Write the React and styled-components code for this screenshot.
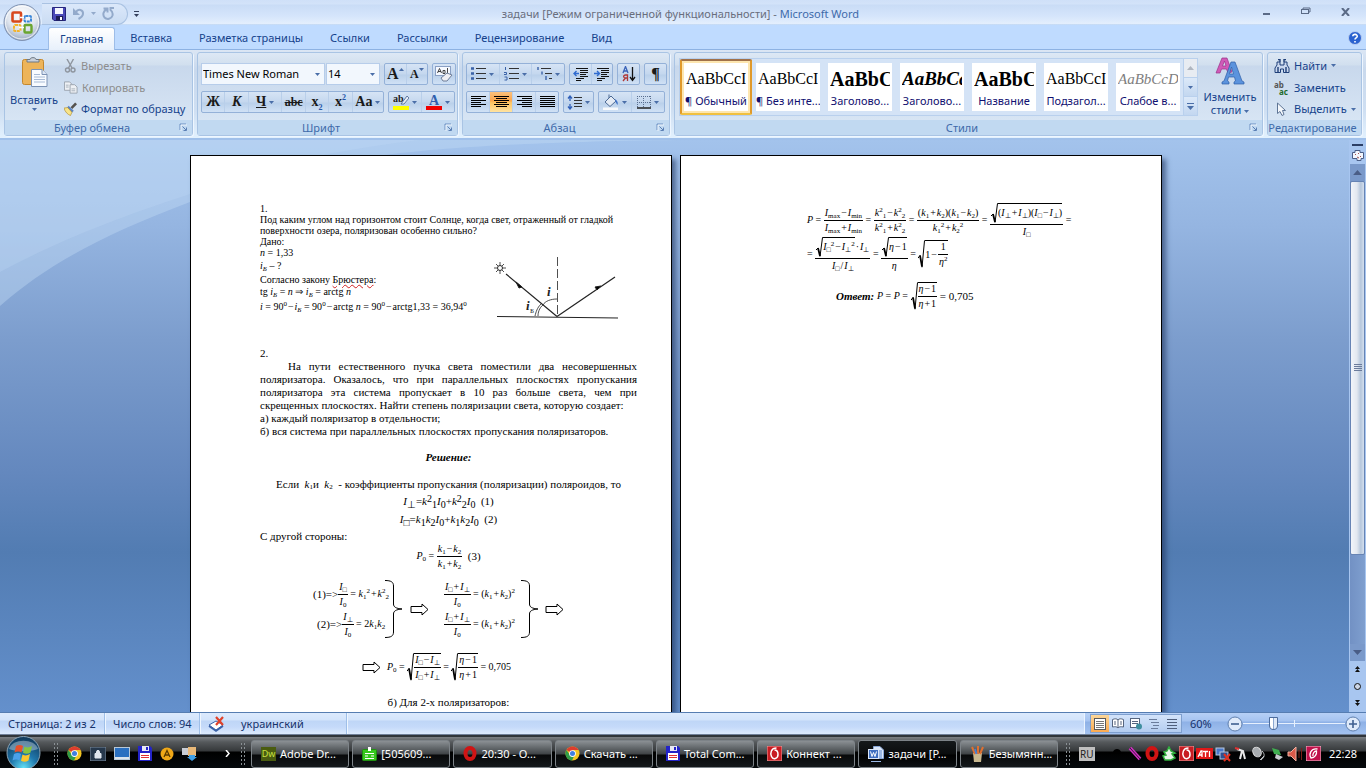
import React from "react";
import styled, { createGlobalStyle, css } from "styled-components";

const UI = '"Noto Sans", "Open Sans", sans-serif';
const SERIF = '"Liberation Serif", serif';

const GlobalStyle = createGlobalStyle`
  * { box-sizing: border-box; }
  body { margin: 0; background: #658fcb; }
  button, select, input { font: inherit; color: inherit; }
`;

/* ---------- shell ---------- */
const Window = styled.div`
  display: flex;
  flex-direction: column;
  height: 100vh;
  min-height: 600px;
  overflow: hidden;
  position: relative;
  font-family: ${UI};
  font-size: 11px;
  line-height: 14px;
  color: #15428b;
  background: #bfdbff;
`;

const PlainButton = styled.button`
  display: inline-flex;
  align-items: center;
  justify-content: center;
  border: 0;
  padding: 0;
  background: none;
  white-space: nowrap;
  cursor: default;
`;

const TitleBar = styled.header`
  flex: none;
  display: flex;
  align-items: center;
  height: 25px;
  padding-top: 2px;
  background: linear-gradient(#cfe0f8 0, #d3e3f9 4px, #c9dcf6 5px, #d5e5fb 16px, #e4effd 24px, #a9c8ee 25px);
`;
const QuickAccess = styled.div`
  display: flex;
  align-items: center;
  gap: 6px;
  height: 22px;
  margin-left: 42px;
  padding: 0 12px 0 10px;
  border: 1px solid #a9c2e2;
  border-left: 0;
  border-radius: 0 11px 11px 0;
  background: linear-gradient(#dbe8fa, #cadcf3);
`;
const Customize = styled(PlainButton)`
  margin-left: 6px;
`;
const Title = styled.h1`
  flex: 1;
  margin: 0;
  padding-right: 24px;
  font-size: 11px;
  font-weight: 400;
  line-height: 14px;
  text-align: center;
  color: #696e7d;
  white-space: nowrap;
`;
const AppName = styled.span`
  color: #3e6aaa;
`;
const WindowButtons = styled.div`
  display: flex;
  gap: 30px;
  padding: 0 16px 4px 0;
  width: 120px;
  justify-content: flex-end;
`;
const OfficeButton = styled(PlainButton)`
  position: absolute;
  left: 2px;
  top: 3px;
`;

const TabBar = styled.nav`
  flex: none;
  display: flex;
  align-items: flex-end;
  height: 25px;
  padding: 0 4px 0 48px;
  background: #bfdbff;
  border-bottom: 1px solid #8db2e3;
`;
const Tab = styled(PlainButton)`
  height: 22px;
  padding: 0 12px 0 11px;
  margin-right: 4px;
  border-radius: 3px 3px 0 0;
  ${(p) =>
    p.$active &&
    css`
      height: 23px;
      margin-bottom: -1px;
      padding: 0 11px;
      border: 1px solid #9dbde8;
      border-bottom: 0;
      background: linear-gradient(#ffffff, #e7f0fb);
    `}
`;
const HelpButton = styled(PlainButton)`
  margin: 0 0 4px auto;
`;

/* ---------- ribbon ---------- */
const Ribbon = styled.section`
  flex: none;
  display: flex;
  gap: 4px;
  height: 90px;
  padding: 2px 4px 2px 4px;
  border-bottom: 2px solid #a0c0ea;
  background: linear-gradient(#dbe6f4, #c9d9ed 20px, #cfdff2 60px, #e2f1fe);
`;
const GroupBox = styled.fieldset`
  display: flex;
  flex-direction: column;
  flex: ${(p) => (p.$grow ? "1" : "none")};
  width: ${(p) => p.$w || "auto"};
  min-width: 0;
  margin: 0;
  padding: 0;
  border: 1px solid #a9c4e4;
  border-radius: 3px;
  background: linear-gradient(#dde8f5, #d1dfee 12px, #c8d8ec 13px, #dbe8f6);
  box-shadow: 1px 1px 0 #eef6ff;
`;
const GroupBody = styled.div`
  flex: 1;
  display: flex;
  min-height: 0;
`;
const GroupFooter = styled.div`
  display: flex;
  align-items: center;
  height: 15px;
  padding-right: 4px;
  background: #c1d9f1;
  color: #3e6aaa;
`;
const GroupName = styled.span`
  flex: 1;
  text-align: center;
  white-space: nowrap;
`;
const BigButton = styled(PlainButton)`
  flex-direction: column;
  justify-content: flex-start;
  width: ${(p) => p.$w};
  padding-top: 4px;
  line-height: 13px;
`;
const BigLabel = styled.span`
  margin: 5px 0 2px;
`;
const Stack = styled.div`
  display: flex;
  flex-direction: column;
  align-items: flex-start;
  padding: 2px 0 0 ${(p) => p.$pad};
`;
const RowButton = styled(PlainButton)`
  height: 22px;
  gap: 4px;
  color: ${(p) => (p.disabled ? "#8d8d8d" : "#15428b")};
`;
const ToolRows = styled.div`
  flex: 1;
  display: flex;
  flex-direction: column;
  gap: 6px;
  padding: 10px 3px 0;
`;
const ToolRow = styled.div`
  display: flex;
  gap: 4px;
  height: 22px;
`;
const ButtonSet = styled.div`
  display: flex;
  border: 1px solid #94b1d8;
  border-radius: 2px;
  background: linear-gradient(#d6e4f5, #c4d7ee 10px, #bad0ea 11px, #d0e1f5);
  width: ${(p) => p.$w};
`;
const Tool = styled(PlainButton)`
  flex: ${(p) => p.$flex || 1};
  gap: 3px;
  border-right: 1px solid #b9cfea;
  &:last-child { border-right: 0; }
  ${(p) =>
    p.$on &&
    css`
      background: linear-gradient(#fbc17d, #fba54a 9px, #fdc25e 10px, #ffe3a0);
    `}
`;
const SizeTool = styled(Tool)`
  gap: 0;
  & svg { align-self: flex-start; margin-top: 4px; }
`;
const Combos = styled.div`
  display: flex;
  gap: 1px;
`;
const Combo = styled.span`
  display: flex;
  align-items: center;
  width: ${(p) => p.$w};
  padding-right: 4px;
  background: #f2f7fd;
  border: 1px solid #b7cdea;
`;
const ComboSelect = styled.select`
  flex: 1;
  min-width: 0;
  appearance: none;
  border: 0;
  padding: 0 1px;
  background: none;
  color: #000;
`;
const Glyph = styled.span`
  font-family: ${SERIF};
  font-size: ${(p) => p.$size || "14px"};
  font-weight: 700;
  font-style: ${(p) => (p.$italic ? "italic" : "normal")};
  text-decoration: ${(p) => p.$deco || "none"};
  color: #1a1a1a;
  line-height: 16px;
  & sub, & sup { font-size: 8px; line-height: 0; color: #2456a8; }
`;

const Gallery = styled.div`
  flex: 1;
  display: flex;
  min-width: 0;
  margin: 5px 0 4px 4px;
  border: 1px solid #b9d0ed;
  background: #d4e3f6;
`;
const GalleryItems = styled.div`
  flex: 1;
  display: flex;
  min-width: 0;
  overflow: hidden;
`;
const StyleCell = styled(PlainButton)`
  flex: none;
  flex-direction: column;
  width: 72px;
  padding: 4px;
  ${(p) =>
    p.$on &&
    css`
      padding: 2px;
      border: 2px solid #e0992b;
      border-top-color: #a0714a;
      border-bottom-color: #f0c040;
      border-radius: 2px;
      background: #fde6b0;
    `}
`;
const StyleCard = styled.span`
  display: flex;
  flex-direction: column;
  width: 64px;
  height: 48px;
  background: #fff;
  overflow: hidden;
  text-align: center;
  color: #101070;
`;
const Sample = styled.span`
  height: 31px;
  width: 60px;
  margin: 0 2px;
  overflow: hidden;
  text-align: left;
  font-family: ${SERIF};
  font-size: ${(p) => p.$size || "16px"};
  line-height: 32px;
  font-weight: ${(p) => (p.$bold ? 700 : 400)};
  font-style: ${(p) => (p.$italic ? "italic" : "normal")};
  color: ${(p) => p.$color || "#000"};
`;
const GalleryScroll = styled.div`
  display: flex;
  flex-direction: column;
  width: 14px;
  border-left: 1px solid #b9d0ed;
`;
const GalleryButton = styled(PlainButton)`
  flex: 1;
  border-bottom: 1px solid #b9d0ed;
  background: ${(p) => (p.disabled ? "#e8ecf2" : "linear-gradient(#dce9f9, #c3d7f0)")};
  &:last-child { border-bottom: 0; }
`;
const InlineArrow = styled.svg`
  vertical-align: middle;
`;

/* ---------- document area ---------- */
const Workspace = styled.main`
  flex: 1;
  display: flex;
  min-height: 0;
  position: relative;
  isolation: isolate;
  background: linear-gradient(#a3c3ec 0, #95b5e1 15%, #7c9dcd 35%, #6488be 58%, #527cb2 72%, #6490cc 100%);
`;
const Swoosh = styled.svg`
  position: absolute;
  inset: 0;
  width: 100%;
  height: 100%;
  z-index: -1;
`;
const Pages = styled.div`
  flex: 1;
  display: flex;
  justify-content: center;
  gap: 8px;
  padding: 15px 0 0 3px;
  overflow: hidden;
`;
const Page = styled.article`
  flex: none;
  width: 482px;
  height: 680px;
  padding: 47px 34px 0 69px;
  border: 1px solid #000;
  background: #fff;
  box-shadow: 4px 4px 5px rgba(30, 50, 90, 0.6);
  color: #000;
  font-family: ${SERIF};
  font-size: 11px;
  line-height: 13px;
`;
const Line = styled.div`
  display: flex;
  align-items: center;
  justify-content: ${(p) => (p.$center ? "center" : "flex-start")};
  height: ${(p) => p.$h || "13px"};
  margin-top: ${(p) => p.$gap || "0"};
  padding-left: ${(p) => p.$indent || "0"};
  white-space: pre;
`;
const Small = styled.section`
  font-size: 10px;
  line-height: 11px;
`;
const Para = styled.p`
  margin: 0;
  white-space: pre-line;
  text-align: ${(p) => (p.$justify ? "justify" : "left")};
  text-indent: ${(p) => (p.$justify ? "28px" : "0")};
`;
const Given = styled.div`
  display: flex;
  justify-content: space-between;
`;
const Figure = styled.svg`
  display: block;
  margin: 19px 16px 0 0;
`;
const Misspelt = styled.span`
  text-decoration: underline wavy #d02020 1px;
  text-underline-offset: 1px;
`;
const Heading = styled.h2`
  margin: 13px 0 12px;
  font-size: 11px;
  line-height: 13px;
  font-style: italic;
  text-align: center;
`;
const Systems = styled.div`
  display: flex;
  align-items: center;
  height: 58px;
  margin-top: 12px;
  padding-left: 53px;
  white-space: pre;
`;
const System = styled.div`
  display: flex;
  flex-direction: column;
  gap: 3px;
  width: ${(p) => p.$w};
`;
const Drawing = styled.svg`
  flex: none;
  display: block;
  margin-left: ${(p) => p.$ml || "0"};
  margin-right: ${(p) => p.$mr || "0"};
`;
const SecondPage = styled.div`
  padding-left: 57px;
`;

/* ---------- formulas ---------- */
const Eq = styled.span`
  display: inline-flex;
  align-items: center;
  white-space: pre;
  font-size: 10px;
  line-height: 12px;
`;
const FracBox = styled.span`
  display: inline-flex;
  flex-direction: column;
  align-items: center;
  line-height: 12px;
`;
const Numerator = styled.span`
  display: inline-flex;
  align-items: center;
  justify-content: center;
  align-self: stretch;
  padding: 0 1px 1px;
  border-bottom: 1px solid #000;
`;
const Denominator = styled.span`
  display: inline-flex;
  align-items: center;
  padding: 1px 1px 0;
`;
const RootBox = styled.span`
  display: inline-flex;
  align-items: stretch;
`;
const Radicand = styled.span`
  display: inline-flex;
  align-items: center;
  border-top: 1px solid #000;
`;
const RootSign = styled.svg`
  display: block;
  width: 7px;
  height: auto;
  flex: none;
`;
const Script = styled.span`
  font-size: ${(p) => p.$size || "7px"};
  font-style: normal;
  position: relative;
  top: ${(p) => (p.$up ? "-3px" : "3px")};
`;
const V = styled.i`
  font-family: ${SERIF};
`;
const Op = styled.span`
  padding: 0 1px;
`;
const Sb = ({ size, children }) => <Script $size={size}>{children}</Script>;
const Sp = ({ size, children }) => <Script $up $size={size}>{children}</Script>;
const Minus = () => <Op>−</Op>;
const Plus = () => <Op>+</Op>;
const Frac = ({ n, d }) => (
  <FracBox>
    <Numerator>{n}</Numerator>
    <Denominator>{d}</Denominator>
  </FracBox>
);
const Root = ({ children }) => (
  <RootBox>
    <RootSign viewBox="0 0 7 20" preserveAspectRatio="none" aria-hidden="true">
      <path d="M0 13L2 11" fill="none" stroke="#000" vectorEffect="non-scaling-stroke" />
      <path d="M2 11L4 19" fill="none" stroke="#000" strokeWidth="1.800" vectorEffect="non-scaling-stroke" />
      <path d="M4 19.500L6.500 0.500H7" fill="none" stroke="#000" vectorEffect="non-scaling-stroke" />
    </RootSign>
    <Radicand>{children}</Radicand>
  </RootBox>
);
const I = ({ s, size }) => (<><V>I</V><Sb size={size}>{s}</Sb></>);
const K = ({ s, p, size }) => (<><V>k</V>{p && <Sp size={size}>{p}</Sp>}<Sb size={size}>{s}</Sb></>);
const PAR = "□";

/* ---------- scrollbar ---------- */
const ScrollColumn = styled.div`
  flex: none;
  display: flex;
  flex-direction: column;
  align-items: center;
  width: 17px;
  padding-top: 4px;
  background: #a8c6f0;
`;
const ScrollTrack = styled.div`
  flex: 1;
  width: 15px;
  display: flex;
  flex-direction: column;
  background: linear-gradient(90deg, #7291c4, #7f9fcf);
`;
const ScrollThumb = styled.div`
  display: flex;
  align-items: center;
  justify-content: center;
  height: 78%;
  border: 1px solid #6784b4;
  border-radius: 2px;
  background: linear-gradient(90deg, #f2f5fa, #e3e8f0 45%, #b6c7dc 75%, #d5e0ee);
`;
const ScrollButton = styled(PlainButton)`
  width: 15px;
  height: 17px;
  flex: none;
  background: ${(p) => (p.$bare ? "none" : "#7a99ca")};
`;

/* ---------- status bar ---------- */
const StatusBar = styled.footer`
  flex: none;
  display: flex;
  align-items: stretch;
  height: 23px;
  border-top: 1px solid #567db1;
  border-bottom: 1px solid #6f7f98;
  background: linear-gradient(#dceafd 0, #d3e4fb 7px, #bfd6f7 8px, #c5dafa 14px, #dceafd);
  color: #15326b;
`;
const StatusItem = styled.span`
  display: flex;
  align-items: center;
  padding: 0 9px 0 8px;
  gap: 16px;
  width: ${(p) => p.$w || "auto"};
  border-right: 1px solid #9fbfe8;
  box-shadow: 1px 0 0 #eef6ff;
  white-space: nowrap;
`;
const StatusRight = styled.div`
  display: flex;
  align-items: center;
  gap: 8px;
  margin-left: auto;
  padding: 0 5px;
  border-left: 1px solid #eaf3ff;
  background: linear-gradient(#b6d0f6 0, #a5c3f0 8px, #8eb1e6 9px, #a3c2f0);
`;
const ViewButtons = styled.div`
  display: flex;
  height: 19px;
  border: 1px solid #7e9fce;
  background: linear-gradient(#d3e3fa, #b4cdf0);
`;
const ViewButton = styled(PlainButton)`
  width: 18px;
  background: ${(p) => (p.$on ? "linear-gradient(#fcd799, #fba94f)" : "none")};
`;
const ZoomValue = styled.span`
  width: 24px;
  margin-right: 5px;
`;
const ZoomSlider = styled.input`
  appearance: none;
  width: 102px;
  height: 15px;
  margin: 0 -8px;
  background:
    linear-gradient(#e6f0fe, #e6f0fe) center / 1px 7px no-repeat,
    linear-gradient(#e6f0fe, #e6f0fe) center / 100% 1px no-repeat;
  &::-webkit-slider-thumb {
    appearance: none;
    width: 9px;
    height: 13px;
    border: 1px solid #4d6c9c;
    border-radius: 1px 1px 5px 5px;
    background: linear-gradient(90deg, #ffffff 3px, #8ba7d0 3px, #8ba7d0 4px, #dfe9f7 4px);
  }
`;

/* ---------- task bar ---------- */
const TaskBar = styled.nav`
  flex: none;
  display: flex;
  align-items: center;
  height: 33px;
  padding: 2px 9px 0 6px;
  border-top: 2px solid #30353a;
  background: linear-gradient(#7c8084 0, #55595c 5px, #35383a 14px, #000 15px, #05090c 31px);
  color: #fff;
`;
const Launchers = styled.div`
  display: flex;
  align-items: center;
  gap: 8px;
  width: 181px;
  padding-left: 8px;
`;
const Chevron = styled(PlainButton)`
  margin: 0 10px 0 auto;
  font-weight: 700;
`;
const Grip = styled.span`
  flex: none;
  width: 6px;
  height: 24px;
  margin-left: ${(p) => p.$ml || "0"};
  background: radial-gradient(circle, #8a9094 1px, transparent 1px) 0 0 / 3px 4px;
`;
const Tasks = styled.div`
  flex: 1;
  display: flex;
  gap: 3px;
  min-width: 0;
  padding: 0 7px 0 5px;
`;
const Task = styled(PlainButton)`
  flex: 1;
  min-width: 0;
  height: 28px;
  justify-content: flex-start;
  gap: 4px;
  padding: 0 2px 0 9px;
  border: 1px solid #7d8388;
  border-radius: 3px;
  background: ${(p) =>
    p.$on
      ? "linear-gradient(#15191b, #0a0c0d 13px, #000 14px, #0c1013)"
      : "linear-gradient(#8b9094, #5c6164 8px, #3f4346 13px, #08090a 14px, #14181b)"};
`;
const Lang = styled.span`
  width: 16px;
  height: 14px;
  margin: 0 14px 0 8px;
  background: #bfbfbf;
  color: #222;
  font-size: 10px;
  text-align: center;
`;
const Tray = styled.div`
  display: flex;
  align-items: center;
  gap: 2px;
`;
const Clock = styled.time`
  margin-left: 8px;
`;
const Orb = styled(PlainButton)`
  margin-top: -2px;
`;

/* ---------- icons ---------- */
const SvgBase = styled.svg`
  flex: none;
  display: block;
`;
const Svg = ({ w = 16, h = 16, vb, children }) => (
  <SvgBase width={w} height={h} viewBox={vb || `0 0 ${w} ${h}`} fill="none" aria-hidden="true">
    {children}
  </SvgBase>
);
const Down = ({ c = "#4a6ea8" }) => (
  <Svg w={5} h={3}><path d="M0 0H5L2.500 3Z" fill={c} /></Svg>
);
const Up = ({ c = "#4a6ea8", w = 7, h = 4 }) => (
  <Svg w={w} h={h} vb="0 0 7 4"><path d="M0 4H7L3.500 0Z" fill={c} /></Svg>
);
const Launcher = () => (
  <Svg w={9} h={9}>
    <path d="M1 7V1H7" stroke="#6a8fc2" />
    <path d="M3.500 3.500L7 7M7.500 4.500V7.500H4.500" stroke="#5b7fb4" />
    <path d="M2 8V2H8" stroke="#fff" opacity=".7" />
  </Svg>
);
const OfficeLogo = () => (
  <Svg w={40} h={40}>
    <defs>
      <radialGradient id="ob" cx=".5" cy=".3" r=".75">
        <stop offset="0" stopColor="#ffffff" />
        <stop offset=".55" stopColor="#dfe5ee" />
        <stop offset="1" stopColor="#8fa0ba" />
      </radialGradient>
    </defs>
    <circle cx="20" cy="19.500" r="18" fill="url(#ob)" stroke="#7f92b2" />
    <circle cx="20" cy="19.500" r="16.500" stroke="#fff" opacity=".8" />
    <rect x="10.500" y="9.500" width="8.500" height="9" rx="1" stroke="#d8471c" strokeWidth="2.600" />
    <rect x="22.500" y="13" width="6.500" height="5.500" rx="1" stroke="#3b86d8" strokeWidth="2" strokeDasharray="3 .7" />
    <rect x="12" y="22" width="6.500" height="6" rx="1" stroke="#f3b32c" strokeWidth="2" strokeDasharray="3 .7" />
    <rect x="22.500" y="22" width="7" height="7.500" rx="1" stroke="#6aa52f" strokeWidth="2.400" />
    <path d="M18 14.500h4M20.500 18v4M17 24.500h5" stroke="#fff" strokeWidth="1.500" />
  </Svg>
);
const Floppy = () => (
  <Svg w={14} h={14}>
    <path d="M0.500 0.500H13.500V13.500H2L.5 12Z" fill="#4a49b8" stroke="#26267e" />
    <rect x="3" y="1" width="8" height="6" fill="#f4f6ff" />
    <rect x="4" y="9" width="7" height="4.500" fill="#1d1d55" />
    <rect x="8" y="10" width="2" height="3" fill="#fff" />
  </Svg>
);
const TotalCmd = () => (
  <Svg w={14} h={15}>
    <path d="M0 0H12L14 2V15H0Z" fill="#2323c8" />
    <rect x="4" y="0" width="7" height="5" fill="#e8e8f4" />
    <rect x="8" y="1" width="2" height="3" fill="#2323c8" />
    <rect x="2" y="7" width="10" height="7" fill="#fff" />
    <path d="M3 9.500H11M3 11.500H11" stroke="#e03030" />
  </Svg>
);
const Undo = () => (
  <Svg w={13} h={13}>
    <path d="M1 1V8H8Z" fill="#93aacb" />
    <path d="M4 5C6 1.500 11.500 2.500 11 7C10.700 9.500 8.500 11 6.500 12" stroke="#93aacb" strokeWidth="2" />
  </Svg>
);
const Redo = () => (
  <Svg w={13} h={13}>
    <path d="M1.500 1.500H5.500V5.500M5 2C1 4 .5 8 2.500 10.500C5 13 9.500 12 10.500 8.500C11 6 10 4 8.500 3V1H12" stroke="#93aacb" strokeWidth="2" />
  </Svg>
);
const Paste = () => (
  <Svg w={27} h={31}>
    <rect x="1.500" y="2.500" width="21" height="25" rx="2" fill="#edb45a" stroke="#c4872c" />
    <path d="M6 5V2.500H9C9 0 15 0 15 2.500H18V5Z" fill="#c9d0da" stroke="#6f7884" />
    <path d="M10.500 12.500H21L26 17.500V29.500H10.500Z" fill="#f8fbff" stroke="#7c92b4" />
    <path d="M21 12.500V17.500H26" fill="#dce6f4" stroke="#7c92b4" />
    <path d="M13 17.500H19M13 20H24M13 22.500H24M13 25H24" stroke="#a8bbd6" />
  </Svg>
);
const Scissors = () => (
  <Svg w={13} h={14}>
    <path d="M3 0L8 9M9.500 0L4.500 9" stroke="#8e959e" strokeWidth="1.400" />
    <circle cx="3.500" cy="11" r="2" stroke="#8e959e" strokeWidth="1.400" />
    <circle cx="9" cy="11" r="2" stroke="#8e959e" strokeWidth="1.400" />
  </Svg>
);
const Copy = () => (
  <Svg w={14} h={13} vb="0 0 15 13">
    <path d="M.5.5H6L8.500 3V9.500H.5Z" fill="#eef1f5" stroke="#9aa2ad" />
    <path d="M6.500 3.500H11.500L14 6V12.500H6.500Z" fill="#eef1f5" stroke="#9aa2ad" />
    <path d="M2 4H5M2 6H5M8 8H12M8 10H12" stroke="#a7afb9" />
  </Svg>
);
const Brush = () => (
  <Svg w={13} h={14} vb="0 0 14 14">
    <path d="M7 5L12 0L14 2L9 7Z" fill="#55524e" />
    <path d="M5 3.500L10.500 9L8.500 11L3 6Z" fill="#5b84c4" />
    <path d="M0 6L4 5.500L8.500 10.500L7 14C4 13 1 10 0 6Z" fill="#f8e488" stroke="#b08a2a" strokeWidth=".7" />
  </Svg>
);
const ClearFmt = () => (
  <Svg w={18} h={16}>
    <rect x=".5" y=".5" width="15" height="9" fill="#f6f9ff" stroke="#8aa0c4" />
    <path d="M2.500 7L4.500 2.500L6.500 7M3 5.500H6M8 7.500V4.500H10V7.500H8M12.500 2V7.500" stroke="#333" strokeWidth=".9" />
    <path d="M6 12L12 7L17 9L12 15L8 15Z" fill="#f0f0f4" stroke="#6f7f9a" />
  </Svg>
);
const Bullets = ({ kind }) => (
  <Svg w={15} h={14}>
    {kind === "n" && <path d="M1.500 0V3M0 5.500H2.500V7.500H0M.5 10H3V13H.5" stroke="#3a62a8" />}
    {kind === "b" && <path d="M0 1.500H3M0 6.500H3M0 11.500H3" stroke="#3a62a8" strokeWidth="2.500" />}
    {kind === "m" && <path d="M1 0V3M5 4.500V7.500M9 9V13" stroke="#3a62a8" strokeWidth="1.400" />}
    {kind === "m" ? <path d="M4 1.500H14M8 6.500H15M12 11.500H15" stroke="#333" /> : <path d="M5 1.500H15M5 6.500H15M5 11.500H15" stroke="#333" />}
  </Svg>
);
const Indent = ({ out }) => (
  <Svg w={15} h={13}>
    <path d="M3 .5H15M7 2.500H15M7 4.500H15M7 6.500H13M7 8.500H15M3 10.500H11M3 12.500H8" stroke="#111" />
    <path d={out ? "M6 5.500H1M3.500 3L1 5.500L3.500 8" : "M0 5.500H5M3 3L5.500 5.500L3 8"} stroke="#2f6bd0" strokeWidth="1.400" />
  </Svg>
);
const SortIcon = () => (
  <Svg w={14} h={16}>
    <path d="M1 7L3.500 0.500L6 7M2 5H5" stroke="#3a62b8" strokeWidth="1.300" />
    <path d="M5.500 15V9H3.500C1 9 1 12 3.500 12H5.500M3.500 12L1 15" stroke="#b03838" strokeWidth="1.300" />
    <path d="M10.500 1V13M8 11L10.500 14.500L13 11" stroke="#111" strokeWidth="1.300" />
  </Svg>
);
const Align = ({ rows }) => (
  <Svg w={15} h={12}>
    {rows.map(([x, w], i) => <rect key={i} x={x} y={i * 2} width={w} height="1" fill="#000" />)}
  </Svg>
);
const Spacing = () => (
  <Svg w={15} h={15}>
    <path d="M3 1V6M1 3.500L3 1L5 3.500M3 9V14M1 11.500L3 14L5 11.500" stroke="#2f5fb8" strokeWidth="1.300" />
    <path d="M7 2.500H15M7 5.500H15M7 8.500H15M7 11.500H15" stroke="#333" />
  </Svg>
);
const Bucket = () => (
  <Svg w={16} h={16}>
    <path d="M2 8L8 2L13 7L7 12.500Z" fill="#e4ebf5" stroke="#4d6a94" />
    <path d="M6 4V0.500" stroke="#4d6a94" />
    <path d="M12 5C15 7 15 9 14.500 11L12.500 8Z" fill="#3f72c8" />
    <rect x="0" y="13.500" width="15" height="2.500" fill="#f7f9fc" />
  </Svg>
);
const Borders = () => (
  <Svg w={14} h={13}>
    <path d="M.5 0V12M6.500 0V12M13.500 0V12M0 .5H14M0 6.500H14" stroke="#5a6f90" strokeDasharray="1 1" />
    <path d="M0 12H14" stroke="#222" strokeWidth="1.500" />
  </Svg>
);
const Marker = () => (
  <Svg w={16} h={16}>
    <text x="0" y="8" fontFamily="Liberation Serif, serif" fontWeight="700" fontSize="10" fill="#222">ab</text>
    <path d="M8 10L14 2L16 4L11 10Z" fill="#e8eef8" stroke="#44618f" strokeWidth=".8" />
    <rect y="12" width="16" height="4" fill="#ffff00" />
  </Svg>
);
const FontColor = () => (
  <Svg w={16} h={16}>
    <text x="3" y="11" fontFamily="Liberation Serif, serif" fontWeight="700" fontSize="14" fill="#2f5fae">А</text>
    <rect y="12" width="16" height="4" fill="#f00000" />
  </Svg>
);
const ChangeStyles = () => (
  <Svg w={30} h={28}>
    <path d="M1 16L7 1H12L17 15L13 16L11.500 12H6.500L5 16ZM7.500 9H11L9.500 4Z" fill="#d05ab8" stroke="#9a3088" strokeWidth=".7" />
    <path d="M7 27V25L9 24L16 5H20L27 24L29 25V27H19V25L20.500 24L19.500 20H13.500L12.500 24L14 25V27ZM14.500 17H18.500L16.500 10Z" fill="#5b93dd" stroke="#2f5fa8" strokeWidth=".7" />
  </Svg>
);
const Binoculars = () => (
  <Svg w={16} h={14}>
    <path d="M3 3H6V6H10V3H13V6L15 9V13.500H9.500V10H6.500V13.500H1V9L3 6Z" fill="#c9d7ee" stroke="#1f3f78" />
    <path d="M4 0.500H6V3M10 3V.5H12M4 8V13M12 8V13" stroke="#1f3f78" strokeWidth="1.400" />
  </Svg>
);
const ReplaceMark = styled.span`
  display: grid;
  grid-template-rows: 7px 7px;
  width: 16px;
  font-size: 8px;
  font-weight: 700;
  line-height: 7px;
  text-align: left;
  color: #555;
`;
const ReplaceTo = styled.span`
  padding-left: 5px;
  color: #1d6b2c;
`;
const Replace = () => (
  <ReplaceMark aria-hidden="true"><span>ab</span><ReplaceTo>ac</ReplaceTo></ReplaceMark>
);
const Cursor = () => (
  <Svg w={16} h={14} vb="-2 0 16 14">
    <path d="M1.500 1V11.500L4 9.500L6 13.500L8 12.500L6.500 8.500H9.500Z" fill="#f4f7fb" stroke="#5f7596" />
  </Svg>
);
const Help = () => (
  <Svg w={14} h={14}>
    <circle cx="7" cy="7" r="6.500" fill="#2a62d0" stroke="#b9cdf0" />
    <path d="M4.800 5.200C5 2.500 9.500 3 9.200 5.500C9 7 7 7 7 8.600M7 10V11.500" stroke="#fff" strokeWidth="1.600" />
  </Svg>
);
const Chrome = () => (
  <Svg w={15} h={15} vb="0 0 16 16">
    <circle cx="8" cy="8" r="7.500" fill="#f3c522" />
    <path d="M8 8L1.500 4.200A7.500 7.500 0 0 1 14.500 4.200H8Z" fill="#dd3d2e" />
    <path d="M1.500 4.200A7.500 7.500 0 0 0 7.500 15.500L10 10L5 9Z" fill="#2f9c48" />
    <circle cx="8" cy="8" r="3.600" fill="#fff" />
    <circle cx="8" cy="8" r="2.700" fill="#3f7fe0" />
  </Svg>
);
const Opera = () => (
  <Svg w={14} h={15}>
    <ellipse cx="7" cy="7.500" rx="4.500" ry="5.500" stroke="#d01414" strokeWidth="4" />
  </Svg>
);
const Connect = () => (
  <Svg w={15} h={15}>
    <rect width="15" height="15" rx="1" fill="#c81c22" stroke="#e8a0a0" />
    <path d="M9.500 2C4 2 3 7 4.500 10.500C6 14 11 13 11 8.500C11 6 10 4 7.500 4" stroke="#fff" strokeWidth="1.500" />
  </Svg>
);
const TrayConnect = () => (
  <Svg w={15} h={15}>
    <rect width="15" height="15" fill="#c0104a" stroke="#f0c0d0" />
    <path d="M11.500 3C5 2 2.500 8 5 12C9 12 11 8 10.500 5C8 5 6.500 8 7 10" stroke="#fff" strokeWidth="1.300" />
  </Svg>
);
const Dreamweaver = () => (
  <Svg w={15} h={14}>
    <rect width="15" height="14" fill="#4a5c10" />
    <text x="7.500" y="10" textAnchor="middle" fontFamily="Noto Sans, sans-serif" fontSize="9" fill="#c8e040">Dw</text>
  </Svg>
);
const GreenId = () => (
  <Svg w={15} h={14}>
    <rect x=".5" y="2.500" width="14" height="11" rx="1" fill="#35c81c" stroke="#1f8f10" />
    <path d="M6 0H9V4H6Z" fill="#fff" />
    <path d="M3 6.500H12M3 9H6M9 9H12M3 11.500H12" stroke="#fff" />
  </Svg>
);
const WordDoc = () => (
  <Svg w={16} h={16}>
    <path d="M5.500 .5H12L15.500 4V12.500H5.500Z" fill="#dce8fa" stroke="#8aa8d8" />
    <path d="M8 5H14M8 7H14M11 9H14M11 11H14" stroke="#5a86cc" />
    <rect x=".5" y="3.500" width="10" height="9" fill="#3f6fc0" stroke="#dce8fa" />
    <path d="M2.500 5.500L4 10.500L5.500 6.500L7 10.500L8.500 5.500" stroke="#fff" />
    <path d="M3 15.500H13" stroke="#9ab8e4" />
  </Svg>
);
const Brushes = () => (
  <Svg w={15} h={16}>
    <path d="M3 7H12L11 16H4Z" fill="#c8b890" />
    <path d="M5 8L2 1M8 8V0M10 8L13 1" stroke="#e07030" strokeWidth="2" />
    <path d="M6.500 8L5 3" stroke="#4a80d0" strokeWidth="2" />
  </Svg>
);
const Wins = () => (
  <Svg w={35} h={34}>
    <defs>
      <radialGradient id="orb" cx=".5" cy=".95" r=".9">
        <stop offset="0" stopColor="#63e0f5" />
        <stop offset=".45" stopColor="#1f77ac" />
        <stop offset="1" stopColor="#123c5e" />
      </radialGradient>
    </defs>
    <circle cx="17.500" cy="17" r="16.500" fill="url(#orb)" stroke="#8aa3b5" />
    <path d="M3 13C6 2 29 2 32 13C24 16 11 16 3 13Z" fill="#fff" opacity=".35" />
    <path d="M10 10C12 8.500 15 8.500 17 10L15.500 16.500C13.500 15 11 15 8.500 16.500Z" fill="#e8502a" />
    <path d="M18.500 10.500C21 12 23.500 11.500 26 10L24.500 16.500C22 18 19.500 18 17 16.800Z" fill="#86c440" />
    <path d="M8 18C10.500 16.500 13 16.500 15 18L13.500 24.500C11.500 23 9 23 6.500 24.500Z" fill="#4aa0ea" />
    <path d="M16.500 18.500C19 20 21.500 19.500 24 18L22.500 24.500C20 26 17.500 26 15 24.800Z" fill="#fbc62c" />
  </Svg>
);
const Arrow = (p) => (
  <Drawing {...p} width="19" height="13" viewBox="0 0 19 13">
    <path d="M1 3.500H12V1L18 6.500L12 12V9.500H1Z" fill="#fff" stroke="#000" />
  </Drawing>
);
const Brace = (p) => (
  <Drawing {...p} width="19" height="58" viewBox="0 0 19 58">
    <path d="M1 .5C7 .5 9.500 2 9.500 6V24C9.500 27 12 28.500 18 29C12 29.500 9.500 31 9.500 34V52C9.500 56 7 57.500 1 57.500" fill="none" stroke="#000" />
  </Drawing>
);

/* ---------- parts ---------- */
const Group = ({ name, w, grow, plain, children }) => (
  <GroupBox $w={w} $grow={grow} aria-label={name}>
    <GroupBody>{children}</GroupBody>
    <GroupFooter>
      <GroupName>{name}</GroupName>
      {!plain && <PlainButton aria-label={`${name}: параметры`}><Launcher /></PlainButton>}
    </GroupFooter>
  </GroupBox>
);

const STYLES = [
  { name: "¶ Обычный", text: "AaBbCcI", on: true },
  { name: "¶ Без инте...", text: "AaBbCcI" },
  { name: "Заголово...", text: "AaBbCc", size: "20px", bold: true },
  { name: "Заголово...", text: "AaBbCc", size: "19px", bold: true, italic: true },
  { name: "Название", text: "AaBbCc", size: "20px", bold: true },
  { name: "Подзагол...", text: "AaBbCcI" },
  { name: "Слабое в...", text: "AaBbCcD", size: "15px", italic: true, color: "#808080" },
];

const TABS = ["Главная", "Вставка", "Разметка страницы", "Ссылки", "Рассылки", "Рецензирование", "Вид"];

const TASKS = [
  ["Adobe Dr...", <Dreamweaver />],
  ["[505609...", <GreenId />],
  ["20:30 - O...", <Opera />],
  ["Скачать ...", <Chrome />],
  ["Total Com...", <TotalCmd />],
  ["Коннект ...", <Connect />],
  ["задачи [Р...", <WordDoc />],
  ["Безымянн...", <Brushes />],
];

const CENTER = [[0, 15], [2, 11], [0, 15], [2, 11], [0, 15], [2, 11]];
const LEFT = [[0, 15], [0, 10], [0, 15], [0, 10], [0, 15], [0, 10]];
const RIGHT = [[0, 15], [5, 10], [0, 15], [5, 10], [0, 15], [5, 10]];
const FULL = [[0, 15], [0, 15], [0, 15], [0, 15], [0, 15], [0, 15]];

const RibbonBar = () => (
  <Ribbon>
    <Group name="Буфер обмена" w="189px">
      <BigButton $w="58px"><Paste /><BigLabel>Вставить</BigLabel><Down /></BigButton>
      <Stack $pad="1px">
        <RowButton disabled><Scissors />Вырезать</RowButton>
        <RowButton disabled><Copy />Копировать</RowButton>
        <RowButton><Brush />Формат по образцу</RowButton>
      </Stack>
    </Group>

    <Group name="Шрифт" w="261px">
      <ToolRows>
        <ToolRow>
          <Combos>
            <Combo $w="124px"><ComboSelect aria-label="Шрифт"><option>Times New Roman</option></ComboSelect><Down /></Combo>
            <Combo $w="54px"><ComboSelect aria-label="Размер"><option>14</option></ComboSelect><Down /></Combo>
          </Combos>
          <ButtonSet $w="44px">
            <SizeTool aria-label="Увеличить размер"><Glyph $size="16px">A</Glyph><Up w={5} h={3} /></SizeTool>
            <SizeTool aria-label="Уменьшить размер"><Glyph $size="12px">A</Glyph><Down /></SizeTool>
          </ButtonSet>
          <ButtonSet $w="24px"><Tool aria-label="Очистить формат"><ClearFmt /></Tool></ButtonSet>
        </ToolRow>
        <ToolRow>
          <ButtonSet $w="183px">
            <Tool><Glyph>Ж</Glyph></Tool>
            <Tool><Glyph $italic>К</Glyph></Tool>
            <Tool $flex="1.450"><Glyph $deco="underline">Ч</Glyph><Down /></Tool>
            <Tool><Glyph $deco="line-through" $size="12px">abc</Glyph></Tool>
            <Tool><Glyph>x<sub>2</sub></Glyph></Tool>
            <Tool><Glyph>x<sup>2</sup></Glyph></Tool>
            <Tool $flex="1.350"><Glyph>Aa</Glyph><Down /></Tool>
          </ButtonSet>
          <ButtonSet $w="67px">
            <Tool aria-label="Выделение цветом"><Marker /><Down /></Tool>
            <Tool aria-label="Цвет текста"><FontColor /><Down /></Tool>
          </ButtonSet>
        </ToolRow>
      </ToolRows>
    </Group>

    <Group name="Абзац" w="208px">
      <ToolRows>
        <ToolRow>
          <ButtonSet $w="99px">
            <Tool aria-label="Маркеры"><Bullets kind="b" /><Down /></Tool>
            <Tool aria-label="Нумерация"><Bullets kind="n" /><Down /></Tool>
            <Tool aria-label="Многоуровневый список"><Bullets kind="m" /><Down /></Tool>
          </ButtonSet>
          <ButtonSet $w="44px">
            <Tool aria-label="Уменьшить отступ"><Indent out /></Tool>
            <Tool aria-label="Увеличить отступ"><Indent /></Tool>
          </ButtonSet>
          <ButtonSet $w="23px"><Tool aria-label="Сортировка"><SortIcon /></Tool></ButtonSet>
          <ButtonSet $w="23px"><Tool><Glyph $size="16px">¶</Glyph></Tool></ButtonSet>
        </ToolRow>
        <ToolRow>
          <ButtonSet $w="93px">
            <Tool aria-label="По левому краю"><Align rows={LEFT} /></Tool>
            <Tool aria-label="По центру" $on><Align rows={CENTER} /></Tool>
            <Tool aria-label="По правому краю"><Align rows={RIGHT} /></Tool>
            <Tool aria-label="По ширине"><Align rows={FULL} /></Tool>
          </ButtonSet>
          <ButtonSet $w="31px"><Tool aria-label="Интервал"><Spacing /><Down /></Tool></ButtonSet>
          <ButtonSet $w="67px">
            <Tool aria-label="Заливка"><Bucket /><Down /></Tool>
            <Tool aria-label="Границы"><Borders /><Down /></Tool>
          </ButtonSet>
        </ToolRow>
      </ToolRows>
    </Group>

    <Group name="Стили" grow>
      <Gallery>
        <GalleryItems>
          {STYLES.map((s, i) => (
            <StyleCell key={i} $on={s.on}>
              <StyleCard>
                <Sample $size={s.size} $bold={s.bold} $italic={s.italic} $color={s.color}>{s.text}</Sample>
                {s.name}
              </StyleCard>
            </StyleCell>
          ))}
        </GalleryItems>
        <GalleryScroll>
          <GalleryButton disabled aria-label="Вверх"><Up c="#b0b6c0" /></GalleryButton>
          <GalleryButton aria-label="Вниз"><Down /></GalleryButton>
          <GalleryButton aria-label="Дополнительно"><Svg w={7} h={7}><path d="M0 .5H7" stroke="#4a6ea8" /><path d="M0 3H7L3.500 7Z" fill="#4a6ea8" /></Svg></GalleryButton>
        </GalleryScroll>
      </Gallery>
      <BigButton $w="64px">
        <ChangeStyles />
        <BigLabel>Изменить<br />стили <InlineArrow width="5" height="3" aria-hidden="true"><path d="M0 0H5L2.500 3Z" fill="#4a6ea8" /></InlineArrow></BigLabel>
      </BigButton>
    </Group>

    <Group name="Редактирование" w="95px" plain>
      <Stack $pad="6px">
        <RowButton><Binoculars />Найти <Down /></RowButton>
        <RowButton><Replace />Заменить</RowButton>
        <RowButton><Cursor />Выделить <Down /></RowButton>
      </Stack>
    </Group>
  </Ribbon>
);

const BrewsterFigure = () => (
  <Figure width="129" height="70" viewBox="0 0 129 70" fill="none" stroke="#222" aria-label="Отражение луча под углом Брюстера">
    <circle cx="8" cy="13" r="2.500" />
    <path d="M8 7V10M8 16V19M2 13H5M11 13H14M4 9L6 11M10 15L12 17M12 9L10 11M4 17L6 15" strokeWidth=".8" />
    <path d="M14 19L65 61.500" strokeWidth="1.200" />
    <path d="M65 61.500L123 22" strokeWidth="1.200" />
    <path d="M5 61.500L126 63" />
    <path d="M65.500 2V61" strokeDasharray="9 3" strokeWidth=".8" />
    <path d="M65 44C59 44 53 46 51 50M51 50C47 53 46 58 46 61M49 49C45 53 44 57 43 61" strokeWidth=".8" />
    <path d="M24 27L30 32L27 33ZM105 35L109 31L103 32Z" fill="#000" />
    <text x="55" y="41" fontFamily="Liberation Serif, serif" fontStyle="italic" fontWeight="700" fontSize="13" fill="#222" stroke="none">i</text>
    <text x="34" y="55" fontFamily="Liberation Serif, serif" fontStyle="italic" fontWeight="700" fontSize="13" fill="#222" stroke="none">i</text>
    <text x="38" y="58" fontFamily="Liberation Serif, serif" fontSize="7" fill="#222" stroke="none">Б</text>
  </Figure>
);

const iB = <><V>i</V><Sb><V>Б</V></Sb></>;

const FirstPage = () => (
  <Page>
    <Small>
      <Para>1.</Para>
      <Para>{"Под каким углом над горизонтом стоит Солнце,   когда свет, отраженный от гладкой\nповерхности озера, поляризован особенно сильно?"}</Para>
      <Given>
        <div>
          <Line $h="11px">Дано:</Line>
          <Line $h="11px"><Eq><V>n</V> = 1,33</Eq></Line>
          <Line $h="16px"><Eq>{iB} – ?</Eq></Line>
          <Line $h="11px">Согласно закону <Misspelt>Брюстера</Misspelt>:</Line>
          <Line $h="13px"><Eq>tg {iB} = <V>n</V> ⇒ {iB} = arctg <V>n</V></Eq></Line>
          <Line $h="18px"><Eq><V>i</V> = 90<Sp>0</Sp><Minus />{iB} = 90<Sp>0</Sp><Minus />arctg <V>n</V> = 90<Sp>0</Sp><Minus />arctg1,33 = 36,94<Sp>0</Sp></Eq></Line>
        </div>
        <BrewsterFigure />
      </Given>
    </Small>

    <Line $gap="22px">2.</Line>
    <Para $justify>
      На пути естественного пучка света поместили два несовершенных поляризатора. Оказалось, что при параллельных плоскостях пропускания поляризатора эта система пропускает в 10 раз больше света, чем при скрещенных плоскостях. Найти степень поляризации света, которую создает:
    </Para>
    <Line>а) каждый поляризатор в отдельности;</Line>
    <Line>б) вся система при параллельных плоскостях пропускания поляризаторов.</Line>

    <Heading>Решение:</Heading>
    <Line $h="16px" $center>Если  <V>k</V><Sb>1</Sb>и  <V>k</V><Sb>2</Sb>  - коэффициенты пропускания (поляризации) поляроидов, то</Line>
    <Line $h="18px" $center><I s="⊥" size="10px" />=<K p="2" s="1" size="10px" /><I s="0" size="10px" />+<K p="2" s="2" size="10px" /><I s="0" size="10px" />  (1)</Line>
    <Line $h="18px" $center><I s={PAR} size="10px" />=<K s="1" size="10px" /><K s="2" size="10px" /><I s="0" size="10px" />+<K s="1" size="10px" /><K s="2" size="10px" /><I s="0" size="10px" />  (2)</Line>
    <Line $h="16px">С другой стороны:</Line>
    <Line $h="24px" $center><Eq><V>P</V><Sb>0</Sb> = <Frac n={<><K s="1" /><Minus /><K s="2" /></>} d={<><K s="1" /><Plus /><K s="2" /></>} /></Eq>  (3)</Line>

    <Systems>
      <System $w="71px">
        <Line $h="27px">(1)=&gt;<Eq><Frac n={<I s={PAR} />} d={<I s="0" />} /> = <K s="1" /><Sp>2</Sp><Plus /><K p="2" s="2" /></Eq></Line>
        <Line $h="27px" $indent="4px">(2)=&gt;<Eq><Frac n={<I s="⊥" />} d={<I s="0" />} /> = 2<K s="1" /><K s="2" /></Eq></Line>
      </System>
      <Brace $mr="7px" />
      <Arrow $mr="15px" />
      <System $w="76px">
        <Line $h="27px"><Eq><Frac n={<><I s={PAR} /><Plus /><I s="⊥" /></>} d={<I s="0" />} /> = (<K s="1" /><Plus /><K s="2" />)<Sp>2</Sp></Eq></Line>
        <Line $h="27px"><Eq><Frac n={<><I s={PAR} /><Plus /><I s="⊥" /></>} d={<I s="0" />} /> = (<K s="1" /><Plus /><K s="2" />)<Sp>2</Sp></Eq></Line>
      </System>
      <Brace $mr="6px" />
      <Arrow />
    </Systems>

    <Line $h="34px" $gap="12px" $center>
      <Arrow $mr="6px" $ml="-24px" />
      <Eq><V>P</V><Sb>0</Sb> = <Root><Frac n={<><I s={PAR} /><Minus /><I s="⊥" /></>} d={<><I s={PAR} /><Plus /><I s="⊥" /></>} /></Root> = <Root><Frac n={<><V>η</V><Minus />1</>} d={<><V>η</V><Plus />1</>} /></Root> = 0,705</Eq>
    </Line>
    <Line $gap="12px" $center>б) Для 2-х поляризаторов:</Line>
  </Page>
);

const NextPage = () => (
  <Page>
    <SecondPage>
      <Line $h="34px">
        <Eq><V>P</V> = <Frac n={<><I s="max" /><Minus /><I s="min" /></>} d={<><I s="max" /><Plus /><I s="min" /></>} /> = <Frac n={<><K p="2" s="1" /><Minus /><K p="2" s="2" /></>} d={<><K p="2" s="1" /><Plus /><K p="2" s="2" /></>} /> = <Frac n={<>(<K s="1" /><Plus /><K s="2" />)(<K s="1" /><Minus /><K s="2" />)</>} d={<><K s="1" /><Sp>2</Sp><Plus /><K s="2" /><Sp>2</Sp></>} /> = <Frac n={<Root>(<I s="⊥" /><Plus /><I s="⊥" />)(<I s={PAR} /><Minus /><I s="⊥" />)</Root>} d={<I s={PAR} />} /> =</Eq>
      </Line>
      <Line $h="34px">
        <Eq>= <Frac n={<><Root><I s={PAR} /><Sp>2</Sp><Minus /><I s="⊥" /><Sp>2</Sp></Root><Op>·</Op><I s="⊥" /></>} d={<><I s={PAR} /><Op>/</Op><I s="⊥" /></>} /> = <Frac n={<Root><V>η</V><Minus />1</Root>} d={<V>η</V>} /> = <Root>1<Minus /><Frac n="1" d={<><V>η</V><Sp>2</Sp></>} /></Root></Eq>
      </Line>
      <Line $h="34px" $gap="8px" $indent="29px">
        <b><i>Ответ: </i></b><Eq><V>P</V> = <V>P</V> = <Root><Frac n={<><V>η</V><Minus />1</>} d={<><V>η</V><Plus />1</>} /></Root></Eq> = 0,705
      </Line>
    </SecondPage>
  </Page>
);

const Scrollbar = () => (
  <ScrollColumn>
    <Svg w={11} h={3}><rect width="11" height="2" fill="#2c3f66" /></Svg>
    <ScrollButton $bare aria-label="Линейка">
      <Svg w={12} h={11}><path d="M.5 2.500H3V.5H8V2.500H11.500V8.500H9V10.500H5V8.500H.5Z" fill="#f2f6fd" stroke="#4b5f88" /><path d="M3 4L4 5M6 3L7 4M8 6L9 7M5 7L7 8" stroke="#a05050" /></Svg>
    </ScrollButton>
    <ScrollTrack>
      <ScrollButton aria-label="Прокрутка вверх"><Up c="#4a5d86" w={9} h={5} /></ScrollButton>
      <ScrollThumb><Svg w={8} h={8}><path d="M0 .5H8M0 2.500H8M0 4.500H8M0 6.500H8" stroke="#6c7c9c" /></Svg></ScrollThumb>
    </ScrollTrack>
    <ScrollButton aria-label="Прокрутка вниз"><Svg w={9} h={5}><path d="M0 0H9L4.500 5Z" fill="#4a5d86" /></Svg></ScrollButton>
    <ScrollButton $bare aria-label="Предыдущая страница"><Svg w={5} h={7}><path d="M0 3L2.500 0L5 3ZM0 6L2.500 3L5 6Z" fill="#111" /></Svg></ScrollButton>
    <ScrollButton $bare aria-label="Объект перехода"><Svg w={7} h={7}><circle cx="3.500" cy="3.500" r="3" fill="#cdd6e6" stroke="#111" /></Svg></ScrollButton>
    <ScrollButton $bare aria-label="Следующая страница"><Svg w={5} h={7}><path d="M0 0H5L2.500 3ZM0 3H5L2.500 6Z" fill="#111" /></Svg></ScrollButton>
  </ScrollColumn>
);

const RoundSign = ({ plus }) => (
  <Svg w={16} h={16}>
    <circle cx="8" cy="8" r="7" fill="#dfeafa" stroke="#5f7fae" />
    <path d={plus ? "M4 8H12M8 4V12" : "M4 8H12"} stroke="#3f5f90" strokeWidth="1.600" />
  </Svg>
);

const Status = () => (
  <StatusBar>
    <StatusItem $w="105px">Страница: 2 из 2</StatusItem>
    <StatusItem $w="95px">Число слов: 94</StatusItem>
    <StatusItem $w="147px">
      <Svg w={17} h={16}>
        <path d="M1 9L8 5L15 9L8 14Z" fill="#fff" stroke="#3a62a8" />
        <path d="M1 10L8 15L15 10" stroke="#3a62a8" strokeWidth="1.600" />
        <path d="M8 1L15 9M15 1L8 9" stroke="#e0422a" strokeWidth="2.200" />
      </Svg>
      украинский
    </StatusItem>
    <StatusRight>
      <ViewButtons>
        <ViewButton $on aria-label="Разметка страницы"><Svg w={12} h={12}><rect x=".5" y=".5" width="11" height="11" fill="#fff" stroke="#5a5a5a" /><path d="M2 3.500H10M2 5.500H10M2 7.500H10M2 9.500H10" stroke="#777" /></Svg></ViewButton>
        <ViewButton aria-label="Режим чтения"><Svg w={12} h={11}><path d="M.5 1.500C3 .5 5 .5 6 2C7 .5 9 .5 11.500 1.500V9C9 8.500 7 8.500 6 10C5 8.500 3 8.500 .5 9ZM6 2V10" fill="#fff" stroke="#56657f" /><path d="M2 4H4M2 6H4M8 4H10M8 6H10" stroke="#56657f" /></Svg></ViewButton>
        <ViewButton aria-label="Веб-документ"><Svg w={12} h={12}><rect x=".5" y=".5" width="9" height="9" fill="#fff" stroke="#56657f" /><path d="M2 3.500H8M2 5.500H8" stroke="#56657f" /><circle cx="9" cy="8.500" r="3" fill="#3f8f9f" /></Svg></ViewButton>
        <ViewButton aria-label="Структура"><Svg w={10} h={10}><path d="M0 .5H8M2 3.500H10M4 6.500H10M2 9.500H9" stroke="#6a7c9c" /></Svg></ViewButton>
        <ViewButton aria-label="Черновик"><Svg w={10} h={10}><path d="M0 .5H10M0 3.500H10M0 6.500H10M0 9.500H10" stroke="#4f5f7c" /></Svg></ViewButton>
      </ViewButtons>
      <ZoomValue>60%</ZoomValue>
      <PlainButton aria-label="Уменьшить"><RoundSign /></PlainButton>
      <ZoomSlider type="range" min="0" max="100" defaultValue="28" aria-label="Масштаб" />
      <PlainButton aria-label="Увеличить"><RoundSign plus /></PlainButton>
    </StatusRight>
  </StatusBar>
);

const Taskbar = () => (
  <TaskBar>
    <Orb aria-label="Пуск"><Wins /></Orb>
    <Grip $ml="12px" />
    <Launchers>
      <Chrome />
      <Svg w={16} h={14}><rect width="16" height="14" fill="#26384c" stroke="#7a8a9c" /><path d="M5 6.500H11V11H5ZM6.500 6V4.500C6.500 3 9.500 3 9.500 4.500V6" fill="#dfe6ee" stroke="#dfe6ee" /></Svg>
      <Svg w={16} h={13}><rect x=".5" y=".5" width="15" height="12" fill="#2a6fc0" stroke="#b8c8d8" /><path d="M1 11H15" stroke="#dce4ec" strokeWidth="2" /></Svg>
      <TotalCmd />
      <Svg w={14} h={14}><circle cx="7" cy="7" r="6.500" fill="#f0a818" /><path d="M4 10L7 3.500L10 10M5 8H9" stroke="#5a3a00" strokeWidth="1.300" /></Svg>
      <Svg w={15} h={15}><rect x="0" y="2" width="8" height="7" fill="#c8ccd4" /><rect x="6" y="1" width="8" height="9" fill="#e8b878" /><path d="M7 9H13V11H15L10 15L5 11H7Z" fill="#3fa0e8" /></Svg>
      <Chevron aria-label="Ещё"><Svg w={5} h={7}><path d="M1 0L4 3.500L1 7" stroke="#fff" strokeWidth="1.500" /></Svg></Chevron>
    </Launchers>
    <Grip />
    <Tasks>
      {TASKS.map(([t, icon], i) => <Task key={i} $on={i === 6}>{icon}{t}</Task>)}
    </Tasks>
    <Grip />
    <Lang>RU</Lang>
    <Tray>
      <Svg w={16} h={16}><path d="M0 8H16V6H12C11 2 5 2 4 6H0Z" fill="#000" /></Svg>
      <Svg w={16} h={16}><path d="M3 2L13 13" stroke="#d030c0" strokeWidth="3.500" /><path d="M3 2L13 13" stroke="#3a1040" /></Svg>
      <Opera />
      <Svg w={16} h={16}><path d="M8 1L10 5L14 7L11 8L14 12L10 14H4L2 10L5 9L3 6L6 5Z" fill="#e8f4e8" stroke="#2fae3c" strokeWidth="1.500" /></Svg>
      <Connect />
      <Svg w={17} h={11}><rect width="17" height="11" fill="#e01818" /><path d="M2 9L5 3H6V9M3.500 7H6M7 3.500H12M9.500 3.500V9M13.500 3V9" stroke="#fff" strokeWidth="1.300" /></Svg>
      <Svg w={16} h={16}><rect x="1" y="2" width="8" height="7" fill="#4a78c8" stroke="#b8c8e0" /><rect x="5" y="6" width="8" height="7" fill="#2f5090" stroke="#b8c8e0" /><path d="M9 8L15 15M15 8L9 15" stroke="#e03020" strokeWidth="2" /></Svg>
      <Svg w={16} h={16}><path d="M4 3L10 5L12 13M9 5L7 13" stroke="#e8e8e8" strokeWidth="2" /><path d="M2 2L6 3" stroke="#e03030" strokeWidth="2" /></Svg>
      <Svg w={16} h={16}><ellipse cx="6" cy="6" rx="4" ry="5" fill="#a8acb0" stroke="#e0e0e0" transform="rotate(-30 6 6)" /><path d="M11 5C14 8 14 11 10 14M9 14L13 10" stroke="#c0c4c8" /></Svg>
      <Svg w={16} h={16}><path d="M3 2L10 4L12 9L5 8Z" fill="#3fae50" /><path d="M7 8L14 11L10 14L6 12Z" fill="#c8ccd0" /></Svg>
      <Svg w={17} h={16}><path d="M1 6H4L9 1V15L4 10H1Z" fill="#d85a4a" stroke="#f0b0a0" /><path d="M12 4V12M14.500 2V14" stroke="#7a2018" /></Svg>
      <TrayConnect />
    </Tray>
    <Clock>22:28</Clock>
  </TaskBar>
);

export default function App() {
  return (
    <Window>
      <GlobalStyle />
      <TitleBar>
        <QuickAccess>
          <PlainButton aria-label="Сохранить"><Floppy /></PlainButton>
          <PlainButton aria-label="Отменить"><Undo /></PlainButton>
          <Down c="#93aacb" />
          <PlainButton aria-label="Повторить"><Redo /></PlainButton>
        </QuickAccess>
        <Customize aria-label="Настройка панели"><Svg w={5} h={6}><path d="M0 .5H5" stroke="#333f5c" /><path d="M0 3H5L2.500 6Z" fill="#333f5c" /></Svg></Customize>
        <Title>задачи [Режим ограниченной функциональности] - <AppName>Microsoft Word</AppName></Title>
        <WindowButtons>
          <PlainButton aria-label="Свернуть"><Svg w={9} h={9}><path d="M1 7H8" stroke="#5a6a86" strokeWidth="2" /></Svg></PlainButton>
          <PlainButton aria-label="Восстановить"><Svg w={10} h={9}><path d="M2 2V1H9V5H8" stroke="#5a6a86" /><rect x=".5" y="2.500" width="7" height="4" stroke="#5a6a86" /></Svg></PlainButton>
          <PlainButton aria-label="Закрыть"><Svg w={9} h={8}><path d="M1 0L8 8M8 0L1 8" stroke="#5a6a86" strokeWidth="2" /></Svg></PlainButton>
        </WindowButtons>
      </TitleBar>
      <TabBar>
        {TABS.map((t, i) => <Tab key={t} $active={i === 0}>{t}</Tab>)}
        <HelpButton aria-label="Справка"><Help /></HelpButton>
      </TabBar>
      <RibbonBar />
      <OfficeButton aria-label="Кнопка Office"><OfficeLogo /></OfficeButton>
      <Workspace>
        <Swoosh viewBox="0 0 1366 572" preserveAspectRatio="xMinYMin slice" aria-hidden="true">
          <path d="M0 0H680C520 2 440 8 385 15L190 62C110 92 50 122 0 166Z" fill="#c4dbf6" opacity=".4" />
          <path d="M0 0H420C330 10 250 30 190 54C110 80 50 105 0 132Z" fill="#c4dbf6" opacity=".25" />
        </Swoosh>
        <Pages>
          <FirstPage />
          <NextPage />
        </Pages>
        <Scrollbar />
      </Workspace>
      <Status />
      <Taskbar />
    </Window>
  );
}
